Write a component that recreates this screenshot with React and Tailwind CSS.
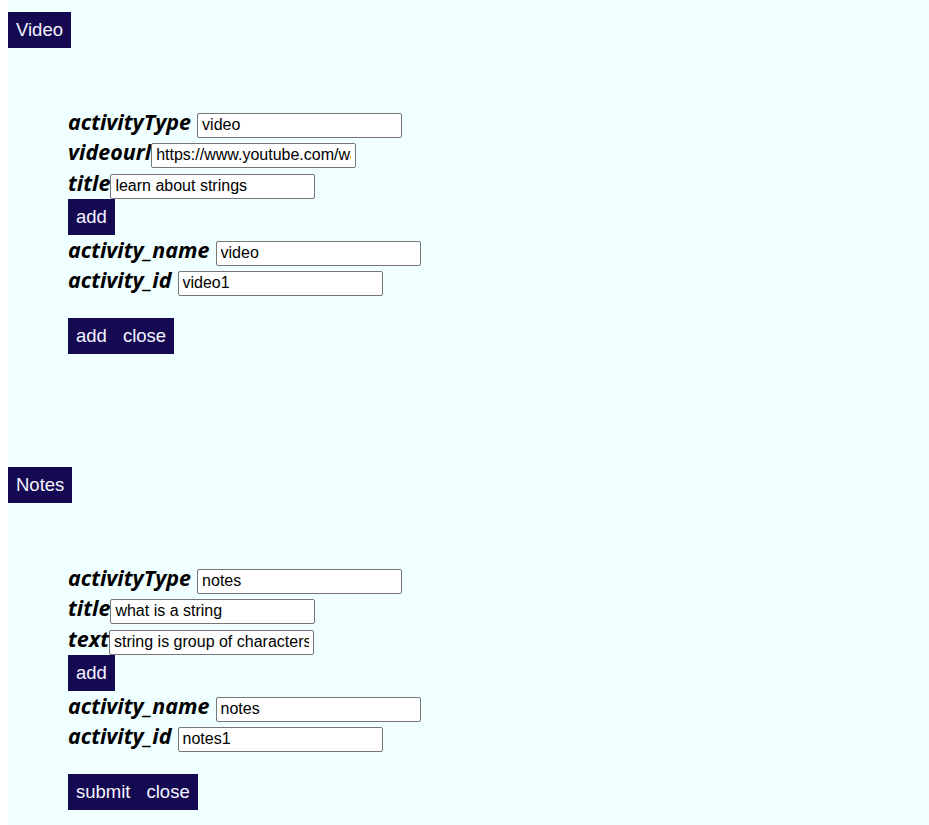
const btn = 'h-[36px] bg-[#150a52] px-[8px] text-[18.5px] leading-[36px] text-[#f4f4ff] font-["Liberation_Sans",Arial,sans-serif]';
const label = 'text-[21.5px] font-bold italic text-black font-["Open_Sans","Lato",sans-serif]';
const field =
  'h-[25px] w-[205px] rounded-[2px] border border-[#767676] bg-white px-[4px] text-[16px] text-black outline-none font-["Liberation_Sans",Arial,sans-serif]';

function Row({ name, value, gap = true, tall }) {
  return (
    <div className={`flex items-baseline ${tall ? 'h-[31px]' : 'h-[30px]'}`}>
      <span className={`${label} leading-[30px] ${gap ? 'mr-[6px]' : ''}`}>{name}</span>
      <input className={field} defaultValue={value} readOnly />
    </div>
  );
}

function Section({ title, fields, actions, className = '', formClass = 'mt-[59px]' }) {
  return (
    <section className={className}>
      <div className="flex">
        <button className={`${btn} h-[35px] leading-[35px]`}>{title}</button>
      </div>
      <div className={`${formClass} ml-[60px]`}>
        {fields.map((f, i) => (
          <Row key={f.name} name={f.name} value={f.value} gap={f.gap} tall={i > 0} />
        ))}
        <div className="flex">
          <button className={btn}>add</button>
        </div>
        <Row name="activity_name" value={actions.name} />
        <Row name="activity_id" value={actions.id} tall />
        <div className="mt-[22px] flex">
          <button className={btn}>{actions.primary}</button>
          <button className={btn}>close</button>
        </div>
      </div>
    </section>
  );
}

export default function App() {
  return (
    <div className="min-h-[825px] bg-white pl-2">
      <div className="min-h-[825px] bg-[#f0ffff] pt-[12px]">
        <Section
          title="Video"
          fields={[
            { name: 'activityType', value: 'video', gap: true },
            { name: 'videourl', value: 'https://www.youtube.com/watch?v=strings', gap: false },
            { name: 'title', value: 'learn about strings', gap: false },
          ]}
          actions={{ name: 'video', id: 'video1', primary: 'add' }}
        />
        <Section
          className="mt-[113px]"
          formClass="mt-[60px]"
          title="Notes"
          fields={[
            { name: 'activityType', value: 'notes', gap: true },
            { name: 'title', value: 'what is a string', gap: false },
            { name: 'text', value: 'string is group of characters', gap: false },
          ]}
          actions={{ name: 'notes', id: 'notes1', primary: 'submit' }}
        />
      </div>
    </div>
  );
}
